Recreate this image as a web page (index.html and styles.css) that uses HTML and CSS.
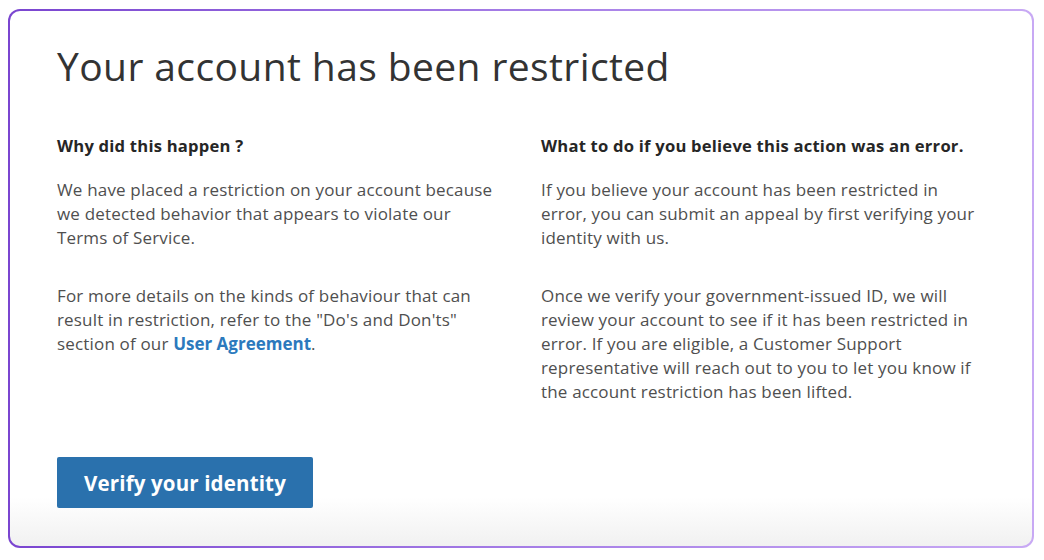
FILE: index.html
```html
<!DOCTYPE html>
<html lang="en">
<head>
<meta charset="utf-8">
<title>Your account has been restricted</title>
<link rel="stylesheet" href="styles.css">
</head>
<body>
<main class="card">
  <h1 class="title">Your account has been restricted</h1>
  <div class="columns">
    <section class="col">
      <h2 class="heading">Why did this happen ?</h2>
      <p class="para">We have placed a restriction on your account because<br>we detected behavior that appears to violate our<br>Terms of Service.</p>
      <p class="para">For more details on the kinds of behaviour that can<br>result in restriction, refer to the "Do's and Don'ts"<br>section of our <a class="link" href="#">User Agreement</a>.</p>
    </section>
    <section class="col">
      <h2 class="heading">What to do if you believe this action was an error.</h2>
      <p class="para">If you believe your account has been restricted in<br>error, you can submit an appeal by first verifying your<br>identity with us.</p>
      <p class="para">Once we verify your government-issued ID, we will<br>review your account to see if it has been restricted in<br>error. If you are eligible, a Customer Support<br>representative will reach out to you to let you know if<br>the account restriction has been lifted.</p>
    </section>
  </div>
  <button class="verify" type="button">Verify your identity</button>
</main>
</body>
</html>
```

FILE: styles.css
```css
* { box-sizing: border-box; }

html, body {
  margin: 0;
  background: #ffffff;
}

body {
  padding: 9px 10px 12px 8px;
  font-family: "Open Sans", "DejaVu Sans", sans-serif;
}

.card {
  height: 539px;
  border: 2px solid transparent;
  border-radius: 12px;
  background:
    linear-gradient(to bottom, #ffffff 0, #ffffff 486px, #f1f1f1 100%) padding-box,
    linear-gradient(90deg, #7a45d0 0%, #a57de6 50%, #c8a9f4 100%) border-box;
  padding: 31px 47px 0 47px;
}

.title {
  margin: 0 0 44px 0;
  font-size: 39px;
  line-height: 48px;
  font-weight: 400;
  color: #333333;
  letter-spacing: 0.4px;
}

.columns {
  display: grid;
  grid-template-columns: 1fr 1fr;
  column-gap: 40px;
}

.heading {
  margin: 0 0 20px 0;
  font-size: 16.6px;
  line-height: 24px;
  font-weight: 700;
  letter-spacing: 0.22px;
  color: #262626;
}

.para {
  margin: 0 0 34px 0;
  font-size: 17px;
  line-height: 24px;
  letter-spacing: 0.17px;
  color: #4f4f4f;
}

.para:last-child {
  margin-bottom: 0;
}

.link {
  color: #2b79bd;
  font-weight: 700;
  letter-spacing: 0;
  text-decoration: none;
}

.verify {
  display: block;
  margin-top: 53px;
  width: 256px;
  height: 51px;
  border: none;
  border-radius: 2px;
  background: #2a71ad;
  color: #ffffff;
  font-family: "Open Sans", "DejaVu Sans", sans-serif;
  font-size: 20.5px;
  font-weight: 700;
  letter-spacing: 0.15px;
  padding: 0;
}
```
